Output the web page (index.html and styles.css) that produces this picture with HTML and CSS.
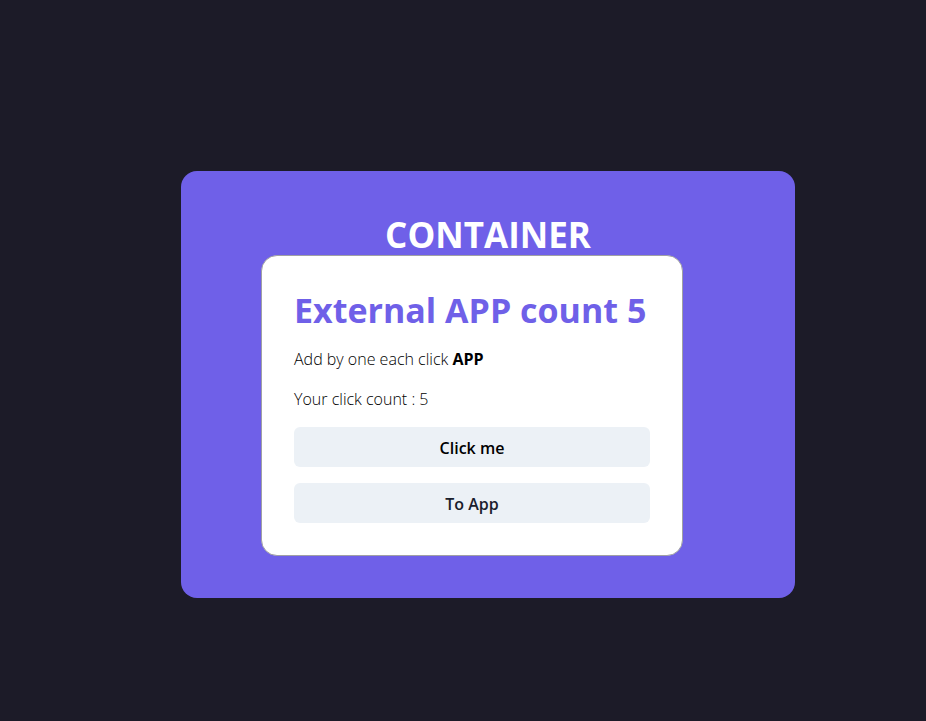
FILE: index.html
```html
<!DOCTYPE html>
<html lang="en">
<head>
  <meta charset="utf-8">
  <meta name="viewport" content="width=device-width, initial-scale=1">
  <title>Container</title>
  <link rel="stylesheet" href="styles.css">
</head>
<body>
  <main class="page">
    <section class="container">
      <h1 class="heading container-title">CONTAINER</h1>
      <article class="card">
        <h2 class="heading card-title">External APP count 5</h2>
        <p class="text">Add by one each click <strong>APP</strong></p>
        <p class="text">Your click count : 5</p>
        <button class="button" type="button">Click me</button>
        <button class="button button-muted" type="button">To App</button>
      </article>
    </section>
  </main>
</body>
</html>
```
FILE: styles.css
```css
* {
  box-sizing: border-box;
  margin: 0;
}

body {
  background: #1c1b28;
  color: #000;
  font-family: "Segoe UI", "Open Sans", "Noto Sans", sans-serif;
  font-size: 16px;
  line-height: 24px;
}

.page {
  display: flex;
  align-items: center;
  justify-content: center;
  min-height: 100vh;
  padding: 48px 0 0 50px;
}

.container {
  display: flex;
  flex-direction: column;
  align-items: center;
  padding: 41px 112px 42px 80px;
  border-radius: 16px;
  background: #6f60e8;
}

.heading {
  padding-top: 2px;
  font-weight: 700;
  line-height: 41px;
}

.container-title {
  margin-left: 32px;
  color: #fff;
  font-size: 35px;
}

.card {
  display: flex;
  flex-direction: column;
  gap: 16px;
  min-width: 422px;
  padding: 32px;
  border: 1px solid #a0a0a4;
  border-radius: 16px;
  background: #fff;
}

.card-title {
  color: #6f60e8;
  font-size: 34px;
}

.text {
  font-weight: 300;
}

.text strong {
  font-weight: 700;
}

.button {
  height: 40px;
  padding: 2px 16px 0;
  border: 0;
  border-radius: 6px;
  background: #ecf1f6;
  color: #000;
  font: inherit;
  font-weight: 600;
  cursor: pointer;
}

.button-muted {
  color: #1a202c;
}
```
